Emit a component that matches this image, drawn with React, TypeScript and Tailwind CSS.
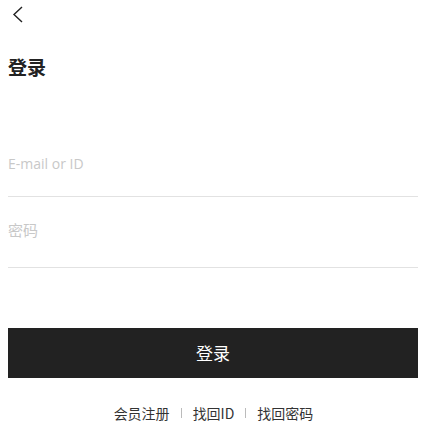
export default function App() {
  return (
    <div className="w-[421px] h-[428px] bg-white overflow-hidden font-['Noto_Sans_CJK_SC','Noto_Sans',sans-serif]">
      {/* header */}
      <div className="h-[30px] pl-[12px] pt-[6px]">
        <svg width="12" height="17" viewBox="0 0 12 17" fill="none">
          <path d="M10 1 L2 8.5 L10 16" stroke="#222" strokeWidth="1.4" />
        </svg>
      </div>
      <h1 className="px-2 mt-[23px] text-[19px] leading-[28px] font-bold text-[#222]">登录</h1>

      {/* fields */}
      <div className="pl-2 pr-[3px] mt-[62px]">
        <div className="border-b border-[#e2e2e2] h-[54px] pt-[7px]">
          <input
            className="w-full outline-none text-[14px] leading-[24px] placeholder:text-[#c8c8c8] font-['Open_Sans','Noto_Sans_CJK_SC',sans-serif]"
            placeholder="E-mail or ID"
          />
        </div>
        <div className="border-b border-[#e2e2e2] h-[71px] pt-[20px]">
          <input
            type="password"
            className="w-full outline-none text-[15px] leading-[24px] placeholder:text-[#c8c8c8]"
            placeholder="密码"
          />
        </div>
      </div>

      {/* submit */}
      <div className="pl-2 pr-[3px] mt-[60px]">
        <button className="w-full h-[50px] bg-[#222222] text-white text-[17px]">登录</button>
      </div>

      {/* links */}
      <div className="flex items-center justify-center gap-[11px] mt-[25px] pl-[6px] text-[14px] leading-[20px] text-[#333]">
        <span>会员注册</span>
        <span className="w-px h-[10px] bg-[#bbb]" />
        <span>找回ID</span>
        <span className="w-px h-[10px] bg-[#bbb]" />
        <span>找回密码</span>
      </div>
    </div>
  );
}
